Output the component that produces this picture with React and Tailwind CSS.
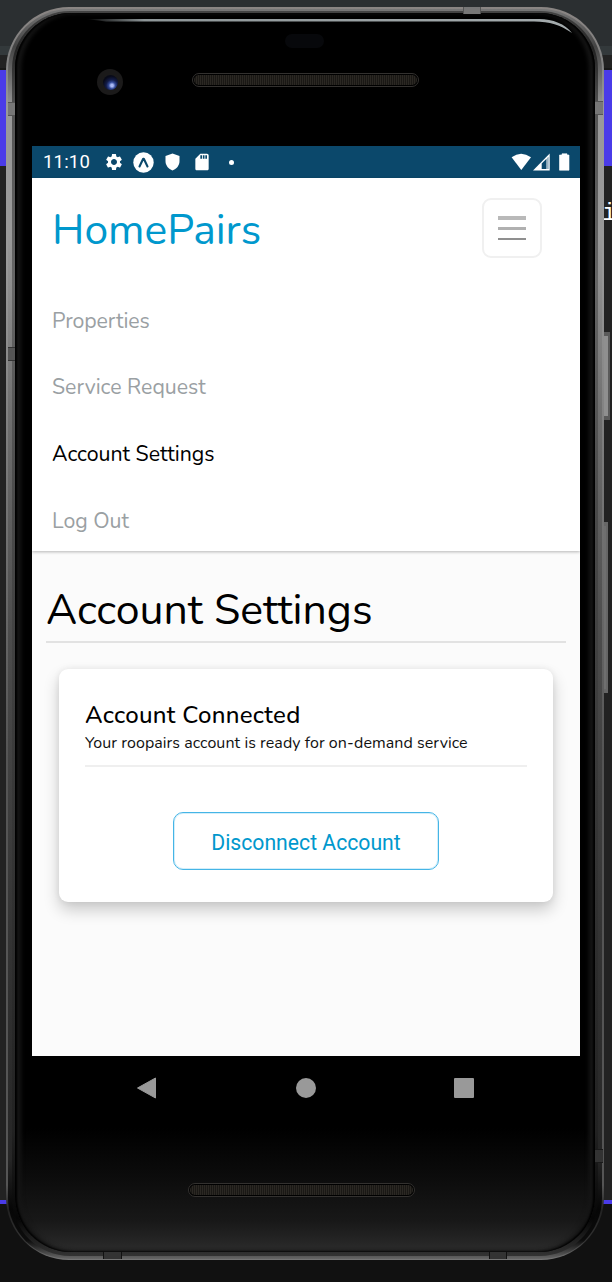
import { MdSettings, MdSdCard } from "react-icons/md";

const nunito = "font-[Nunito,Lato,'Open_Sans',sans-serif]";

function Backdrop() {
  return (
    <div className="absolute inset-0 flex flex-col bg-[#222222]">
      <div className="h-[46px] bg-[#2b2f31]" />
      <div className="h-[9px] bg-[#33393b]" />
      <div className="h-[13px] bg-[#222222]" />
      <div className="h-[2px] bg-[#181818]" />
      <div className="h-[96px] bg-[#4a3be8]" />
      <div className="flex-1 flex justify-end">
        <span className="mt-[34px] w-[10px] font-['Liberation_Mono',monospace] text-[24px] leading-[27px] text-white">i</span>
      </div>
      <div className="h-[4px] bg-[#4a3be8]" />
      <div className="h-[78px] bg-[#111111]" />
    </div>
  );
}

function Speaker() {
  return (
    <div className="h-[14px] w-[227px] rounded-full border-[1.5px] border-[#33312f] bg-black p-[1px]">
      <div className="h-full w-full rounded-full bg-[repeating-linear-gradient(90deg,#2b2823_0_1px,#1a1815_1px_2px)]" />
    </div>
  );
}

function StatusBar() {
  return (
    <div className="flex h-[32px] shrink-0 items-center bg-[#0b486b] pl-[11px] pr-[10px] text-white">
      <span className="w-[61px] font-[Roboto,sans-serif] text-[18.5px] leading-[34px] tracking-[0.2px]">11:10</span>
      <MdSettings className="size-[20px]" />
      <svg className="ml-[9px] size-[21px]" viewBox="0 0 21 21">
        <circle cx="10.5" cy="10.5" r="10.2" fill="#fff" />
        <path d="M6.500 14.500 10.200 6.700h.6l3.700 7.800" fill="none" stroke="#0b486b" strokeWidth="2.100" strokeLinejoin="round" strokeLinecap="round" />
      </svg>
      <svg className="ml-[11px] h-[18px] w-[15px]" viewBox="0 0 15 18">
        <path d="M7.500.500 14.500 3V8C14.500 12.500 11.500 16 7.500 17.500 3.500 16 .5 12.500.5 8V3Z" fill="#fff" />
      </svg>
      <MdSdCard className="ml-[12px] size-[20px]" />
      <span className="ml-[17px] size-[5px] rounded-full bg-white" />
      <svg className="ml-auto h-[18px] w-[59px]" viewBox="0 0 59 18">
        <path d="M.6 4.200Q10-2.800 20 4.200L10.300 17Z" fill="#fff" />
        <path d="M22 17.500H38.700V.500Z" fill="#fff" />
        <path d="M30.700 16V10.500L35.500 5.700V16Z" fill="#0b486b" />
        <path d="M36.300 16V5L37.500 3.800V16Z" fill="#0b486b" opacity=".6" />
        <path d="M48.500 2h2.500V.800h5V2h2v15.200h-9.500Z" fill="#fff" stroke="#fff" strokeWidth=".6" />
      </svg>
    </div>
  );
}

function Menu() {
  return (
    <div className="relative h-[373px] shrink-0 bg-white pl-[20px] pr-[38px] pt-[20px] shadow-[0_1px_3px_rgba(0,0,0,0.28)]">
      <div className="flex justify-between">
        <h1 className={`${nunito} text-[42.6px] leading-[64px] text-[#0098cd] whitespace-nowrap`}>HomePairs</h1>
        <button className="flex h-[60px] w-[60px] flex-col items-center rounded-[9px] border-2 border-[#f0f0f0] pt-[16px]">
          <span className="h-[4px] w-[28px] bg-[#b9b9b9]" />
          <span className="mt-[7px] h-[3px] w-[28px] bg-[#b0b0b0]" />
          <span className="mt-[8px] h-[2px] w-[28px] bg-[#8f8f8f]" />
        </button>
      </div>
      <nav className={`${nunito} mt-[26px] flex flex-col text-[21.3px] text-[#9aa0a3] whitespace-nowrap`}>
        <a className="h-[66px] leading-[66px] tracking-[-0.1px]">Properties</a>
        <a className="h-[67px] leading-[66px]">Service Request</a>
        <a className="h-[67px] leading-[66px] text-black">Account Settings</a>
        <a className="h-[66px] leading-[66px]">Log Out</a>
      </nav>
    </div>
  );
}

function Account() {
  return (
    <div className="flex-1 bg-[#fbfbfb] px-[14px] pt-[31px]">
      <h2 className={`${nunito} h-[61px] border-b-2 border-[#e2e2e2] text-[42.8px] leading-[56px] text-black whitespace-nowrap`}>Account Settings</h2>
      <section className="mx-[13px] mt-[26px] flex h-[233px] flex-col rounded-[9px] bg-white px-[26px] pt-[33px] shadow-[0_8px_16px_rgba(0,0,0,0.2),0_0_6px_rgba(0,0,0,0.07)]">
        <h3 className={`${nunito} text-[24px] font-medium leading-[27px] tracking-[0.3px] text-black whitespace-nowrap`}>Account Connected</h3>
        <p className={`${nunito} h-[38px] border-b-2 border-[#efefef] text-[16px] leading-[28px] tracking-[0.06px] text-[#111] whitespace-nowrap`}>Your roopairs account is ready for on-demand service</p>
        <button className="mt-[45px] h-[58px] w-[266px] self-center rounded-[10px] border border-[#45b5e6] pt-[3px] font-[Roboto,sans-serif] text-[21.2px] text-[#0098cd] shadow-[inset_0_0_0_1px_#d3eefa]">Disconnect Account</button>
      </section>
    </div>
  );
}

function SideKeys() {
  return (
    <>
      <div className="absolute left-[602px] top-[332px] h-[88px] w-[8px] border-y-4 border-r-2 border-[#5a5a5a] bg-[#8f8f8f]" />
      <div className="absolute left-[602px] top-[522px] h-[171px] w-[6px] border-y-4 border-r-2 border-[#666] bg-[#6f6f6f]" />
    </>
  );
}

function AntennaBands() {
  return (
    <>
      <div className="absolute left-[8px] top-[102px] h-[14px] w-[7px] border-y border-[#555] bg-[#777]" />
      <div className="absolute left-[8px] top-[347px] h-[14px] w-[7px] border-y border-[#333] bg-[#555]" />
      <div className="absolute left-[595px] top-[101px] h-[14px] w-[8px] border-y border-[#555] bg-[#777]" />
      <div className="absolute left-[595px] top-[1149px] h-[14px] w-[8px] border-y border-[#1a1a1a] bg-[#333]" />
      <div className="absolute left-[463px] top-[7px] h-[7px] w-[18px] border-x border-[#555] bg-[#777]" />
      <div className="absolute left-[103px] top-[1252px] h-[7px] w-[19px] border-x border-[#111] bg-[#333]" />
      <div className="absolute left-[489px] top-[1252px] h-[7px] w-[18px] border-x border-[#111] bg-[#333]" />
    </>
  );
}

export default function App() {
  return (
    <div className="relative h-[1282px] w-[612px] overflow-hidden">
      <Backdrop />
      <SideKeys />
      <div className="relative ml-[6px] pt-[7px]">
        <div className="h-[1253px] w-[598px] rounded-[63px] bg-[linear-gradient(180deg,#8a8583_0%,#808080_4%,#999_8%,#9a9a9a_20%,#777_38%,#555_60%,#555_94%,#222_96%,#333_98.5%,#777_100%)] px-[2px] pt-[2px] pb-[1px]">
          <div className="h-full rounded-[61px] bg-[linear-gradient(180deg,#777_0%,#444_3%,#999_8%,#999_18%,#707070_32%,#4c4c4c_50%,#333_75%,#262626_92%,#060606_96%,#0c0c0c_98.5%,#666_100%)] px-[4px] pt-[2px] pb-[3px]">
            <div className="h-full rounded-[58px] bg-[linear-gradient(180deg,#444_0%,#222_3%,#555_8%,#666_22%,#4a4a4a_40%,#333_70%,#222_90%,#060606_97%,#333_100%)] px-[3px] pt-[2px] pb-[4px]">
              <div className="flex h-full flex-col rounded-[56px] bg-[linear-gradient(180deg,#000_0%,#000_90%,#0c0c0c_94%,#181818_97.5%,#2c2c2c_100%)] px-[17px] shadow-[inset_2px_0_2px_#000,inset_-2px_0_2px_#000,inset_6px_0_4px_#161616,inset_-6px_0_4px_#161616]">
                <header className="relative h-[133px] shrink-0">
                  <svg className="absolute left-[54px] top-[5px] h-[18px] w-[490px]" viewBox="0 0 490 18">
                    <defs>
                      <linearGradient id="glare" x1="0" x2="1">
                        <stop offset="0" stopColor="#8e9698" stopOpacity="0" />
                        <stop offset=".12" stopColor="#8e9698" />
                        <stop offset="1" stopColor="#a4abad" />
                      </linearGradient>
                    </defs>
                    <path d="M0 1H453C467 1 479 6 486 15C474 7 464 3.500 448 3.500H20Z" fill="url(#glare)" />
                  </svg>
                  <div className="absolute left-[253px] top-[21px] h-[14px] w-[39px] rounded-full bg-[#07080b]" />
                  <div className="absolute left-[65px] top-[56px] flex size-[26px] items-center justify-center rounded-full bg-[#1b1a1a]">
                    <div className="size-[15px] rounded-full bg-[radial-gradient(circle_at_60%_70%,#a9b9f5_0_9%,#334a98_24%,#131c48_42%,#080a18_68%)]" />
                  </div>
                  <div className="absolute left-[160px] top-[60px]"><Speaker /></div>
                </header>
                <main className="flex h-[910px] w-[548px] shrink-0 flex-col overflow-hidden">
                  <StatusBar />
                  <Menu />
                  <Account />
                </main>
                <nav className="flex h-[64px] shrink-0 items-center justify-between px-[104px]">
                  <svg className="size-[22px]" viewBox="0 0 22 22"><path d="M1.500 11 19.500 1V21Z" fill="#999" stroke="#999" strokeLinejoin="round" /></svg>
                  <div className="size-[20px] rounded-full bg-[#999]" />
                  <div className="size-[20px] rounded-[1px] bg-[#999]" />
                </nav>
                <div className="ml-[156px] mt-[63px]"><Speaker /></div>
              </div>
            </div>
          </div>
        </div>
      </div>
      <AntennaBands />
    </div>
  );
}
